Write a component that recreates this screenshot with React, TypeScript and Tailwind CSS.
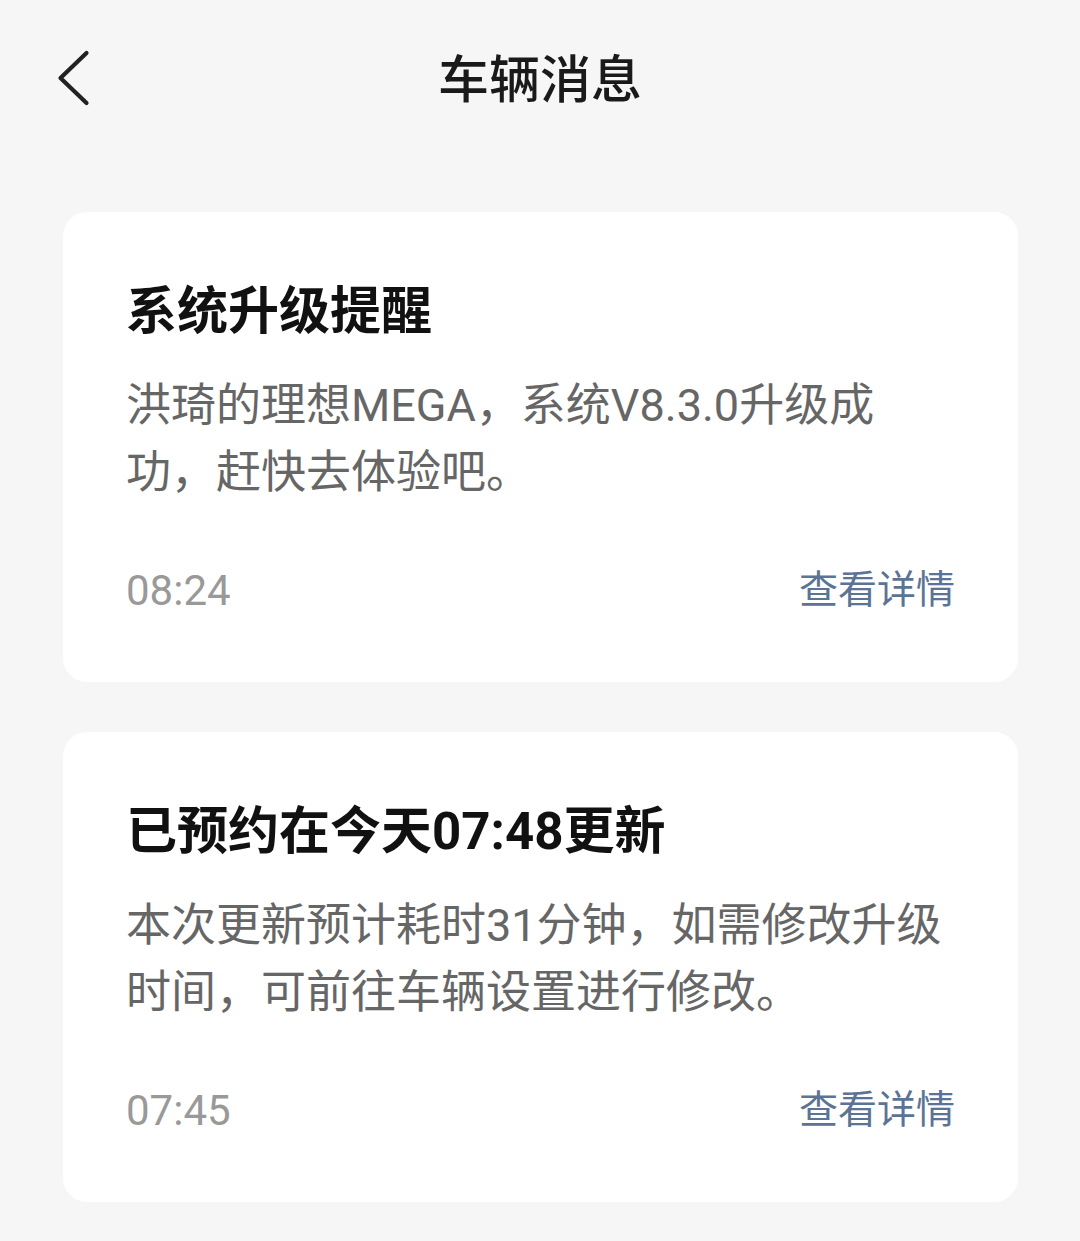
import React from 'react';

interface Message {
  title: string;
  lines: string[];
  time: string;
}

const messages: Message[] = [
  {
    title: '系统升级提醒',
    lines: ['洪琦的理想MEGA，系统V8.3.0升级成', '功，赶快去体验吧。'],
    time: '08:24',
  },
  {
    title: '已预约在今天07:48更新',
    lines: ['本次更新预计耗时31分钟，如需修改升级', '时间，可前往车辆设置进行修改。'],
    time: '07:45',
  },
];

const font = { fontFamily: 'Roboto, "Noto Sans CJK SC", sans-serif' };

const MessageCard: React.FC<{ msg: Message }> = ({ msg }) => (
  <div className="bg-white rounded-[24px] pl-[63px] pr-[63px] pt-[70px] pb-[67px]">
    <div className="text-[51px] leading-[60px] font-bold text-[#111111] whitespace-nowrap">{msg.title}</div>
    <div className="mt-[30px] text-[45px] leading-[67px] text-[#666666] whitespace-nowrap">
      {msg.lines.map((l, i) => (
        <div key={i}>{l}</div>
      ))}
    </div>
    <div className="mt-[59px] flex items-center justify-between h-[50px]">
      <span className="text-[42px] text-[#999999]">{msg.time}</span>
      <span className="text-[39px] text-[#5b7395]">查看详情</span>
    </div>
  </div>
);

export default function App() {
  return (
    <div className="w-[1080px] h-[1241px] bg-[#f6f6f6] overflow-hidden" style={font}>
      {/* Header */}
      <div className="relative h-[160px] flex items-center justify-center">
        <svg
          className="absolute left-[55px] top-[48px]"
          width="40"
          height="60"
          viewBox="0 0 40 60"
          fill="none"
        >
          <path
            d="M31.5 5 L5.5 30 L31.5 55"
            stroke="#222222"
            strokeWidth="4.2"
            strokeLinecap="round"
            strokeLinejoin="round"
          />
        </svg>
        <span className="text-[51px] font-medium text-[#1a1a1a] leading-none">车辆消息</span>
      </div>

      {/* List */}
      <div className="pl-[63px] pr-[62px] pt-[52px] flex flex-col gap-[50px]">
        {messages.map((m, i) => (
          <MessageCard key={i} msg={m} />
        ))}
      </div>
    </div>
  );
}
